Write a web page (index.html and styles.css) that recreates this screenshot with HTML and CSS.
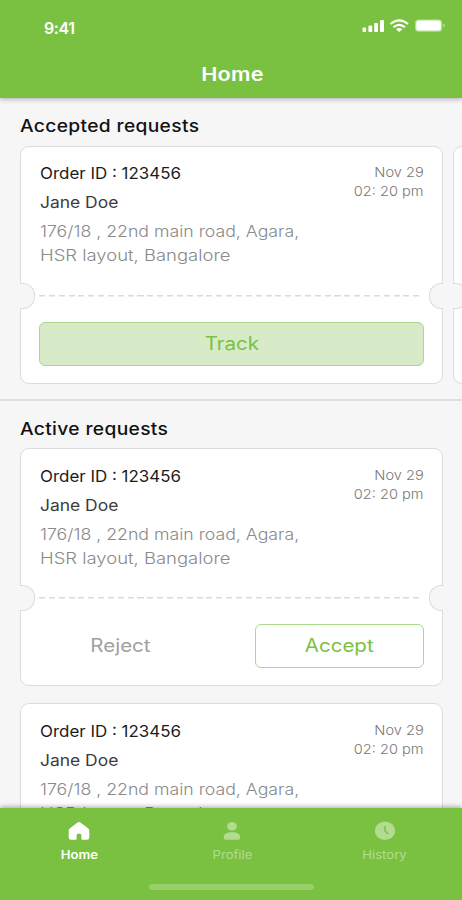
FILE: index.html
```html
<!DOCTYPE html>
<html lang="en">
<head>
<meta charset="utf-8">
<title>Home</title>
<link rel="stylesheet" href="styles.css">
</head>
<body>
<header class="header">
  <div class="status">
    <span class="clock">9:41</span>
    <svg class="status-icons" width="84" height="16" viewBox="0 0 84 16" fill="#fff">
      <rect x="0.5" y="8.5" width="3.6" height="4.5" rx="1"/><rect x="6.4" y="6.5" width="3.8" height="6.5" rx="1"/><rect x="12.2" y="4" width="3.8" height="9" rx="1"/><rect x="18" y="1" width="4" height="12" rx="1"/>
      <g fill="none" stroke="#fff" stroke-width="2.1"><path d="M28.5 5Q37.2-2.2 46 5"/><path d="M31.4 8.3Q37.2 3.6 43 8.3"/></g>
      <path d="M34 10.3Q37.2 7.8 40.4 10.3L37.2 13Z"/>
      <rect x="53" y=".5" width="27.2" height="12.2" rx="3.5" fill="#b5dc99"/><rect x="54.3" y="1.6" width="24.6" height="10" rx="2.5"/><path d="M81.4 4.4Q84.4 6.5 81.4 8.6Z" fill="#c4e3ac"/>
    </svg>
  </div>
  <h1 class="title"><span class="wide">Home</span></h1>
</header>
<main class="content">
  <section class="accepted">
    <h2 class="section-title"><span>Accepted requests</span></h2>
    <div class="card-row">
      <article class="card">
        <div class="details">
          <div>
            <p class="order"><span>Order ID : 123456</span></p>
            <p class="name"><span>Jane Doe</span></p>
            <p class="address"><span class="street">176/18 , 22nd main road, Agara,</span><br><span class="city">HSR layout, Bangalore</span></p>
          </div>
          <p class="date"><span class="day">Nov 29</span><br><span class="time">02: 20 pm</span></p>
        </div>
        <div class="tear"></div>
        <div class="actions"><button class="btn track"><span class="wide">Track</span></button></div>
      </article>
      <article class="card"><div class="details"></div><div class="tear"></div></article>
    </div>
  </section>
  <section class="active">
    <h2 class="section-title"><span>Active requests</span></h2>
    <div class="card-list">
      <article class="card">
        <div class="details">
          <div>
            <p class="order"><span>Order ID : 123456</span></p>
            <p class="name"><span>Jane Doe</span></p>
            <p class="address"><span class="street">176/18 , 22nd main road, Agara,</span><br><span class="city">HSR layout, Bangalore</span></p>
          </div>
          <p class="date"><span class="day">Nov 29</span><br><span class="time">02: 20 pm</span></p>
        </div>
        <div class="tear"></div>
        <div class="actions"><button class="btn reject"><span class="wide">Reject</span></button><button class="btn accept"><span class="wide">Accept</span></button></div>
      </article>
      <article class="card">
        <div class="details">
          <div>
            <p class="order"><span>Order ID : 123456</span></p>
            <p class="name"><span>Jane Doe</span></p>
            <p class="address"><span class="street">176/18 , 22nd main road, Agara,</span><br><span class="city">HSR layout, Bangalore</span></p>
          </div>
          <p class="date"><span class="day">Nov 29</span><br><span class="time">02: 20 pm</span></p>
        </div>
        <div class="tear"></div>
      </article>
    </div>
  </section>
</main>
<footer class="footer">
  <nav class="tabs">
    <a class="tab selected">
      <svg width="22" height="20" viewBox="0 0 22 20" fill="currentColor"><path d="M9.2 1.8Q11 .2 12.8 1.8L20.3 7.6Q21.3 8.5 21.3 9.7V16.5Q21.3 18.8 19 18.8H14.4Q13.4 18.8 13.4 17.8V14.5Q13.4 12.5 11 12.5T8.6 14.5V17.8Q8.6 18.8 7.6 18.8H3Q.7 18.8.7 16.5V9.7Q.7 8.5 1.7 7.6Z"/></svg>
      <span class="wide">Home</span>
    </a>
    <a class="tab">
      <svg width="22" height="20" viewBox="0 0 22 20" fill="currentColor"><ellipse cx="11" cy="5.2" rx="4.8" ry="4.3"/><path d="M2.7 16.5C2.7 12.7 6 11.2 11 11.2S19.3 12.7 19.3 16.5Q19.3 18.8 17 18.8H5Q2.7 18.8 2.7 16.5Z"/></svg>
      <span class="wide">Profile</span>
    </a>
    <a class="tab">
      <svg width="22" height="20" viewBox="0 0 22 20" fill="currentColor"><ellipse cx="11" cy="9.8" rx="10.2" ry="9.2"/><path d="M11 5V10L14.2 13" fill="none" stroke="#7ac142" stroke-width="1.5"/></svg>
      <span class="wide">History</span>
    </a>
  </nav>
  <div class="home-bar"></div>
</footer>
</body>
</html>
```

FILE: styles.css
```css
* { box-sizing: border-box; }
body, h1, h2, p { margin: 0; }
body {
  display: flex;
  flex-direction: column;
  width: 462px;
  height: 900px;
  overflow: hidden;
  background: #f6f6f6;
  font-family: Inter, "Liberation Sans", sans-serif;
  color: #1c1c1c;
  white-space: nowrap;
}
.header {
  z-index: 1;
  flex: none;
  height: 98px;
  background: #7ac142;
  color: #fff;
  box-shadow: 0 1px 5px rgba(60, 40, 80, .4);
}
.status {
  display: flex;
  justify-content: space-between;
  height: 60px;
  padding: 19px 16px 0 44px;
}
.clock { font-size: 16px; line-height: 19px; font-weight: 600; letter-spacing: -.4px; }
.title { padding-left: 2px; text-align: center; font-size: 19px; line-height: 30px; font-weight: 600; letter-spacing: .2px; }
.content { flex: 1; min-height: 0; overflow: hidden; }
.accepted { height: 303px; padding: 16px 0 0 20px; border-bottom: 2px solid #dedede; }
.section-title { font-size: 17px; line-height: 24px; font-weight: 500; letter-spacing: .3px; color: #111; }

/* Widened letterforms */
.section-title span, .order span, .name span, .address span { display: inline-block; transform-origin: left; }
.section-title span { transform: scaleX(1.13); }
.order span { transform: scaleX(1.058); }
.name span { transform: scaleX(1.09); }
.address .street { transform: scaleX(1.107); }
.address .city { transform: scaleX(1.153); }
.date span { display: inline-block; transform: scaleX(1.08); transform-origin: right; }
.wide { display: inline-block; transform: scaleX(1.14); }

.card-row { display: flex; gap: 10px; padding-top: 8px; }
.active { padding: 16px 19px 0 20px; }
.card-list { display: flex; flex-direction: column; gap: 17px; padding-top: 7px; }
.card {
  flex: none;
  width: 423px;
  height: 238px;
  border: 1.5px solid #dcdcdc;
  border-radius: 9px;
  background: #fff;
}
.details { display: flex; justify-content: space-between; height: 136px; padding: 14px 18px 0 19px; }
.card-list .details { padding-top: 15px; }
.order { font-size: 16px; line-height: 25px; }
.name { padding-top: 4px; font-size: 16px; line-height: 25px; color: #3c3c3c; }
.address { padding-top: 4px; font-size: 16px; line-height: 24px; font-weight: 300; color: #8a8a8a; }
.date { padding-top: 2px; font-size: 13.5px; line-height: 18.7px; font-weight: 300; color: #777; text-align: right; }
.tear {
  display: flex;
  align-items: center;
  justify-content: space-between;
  height: 25px;
  margin: 0 -1px;
  background: repeating-linear-gradient(90deg, #dadada 0 6px, transparent 6px 9.85px) 19px 12px / 381px 1.5px no-repeat;
}
.tear::before, .tear::after { content: ""; width: 13.5px; height: 24px; border: 1.5px solid #dcdcdc; background: #f6f6f6; }
.tear::before { border-left: 0; border-radius: 0 12px 12px 0; }
.tear::after { border-right: 0; border-radius: 12px 0 0 12px; }
.actions { display: flex; gap: 48px; padding: 14px 18px 0 18px; }
.btn { height: 44px; padding: 0; border: 1.5px solid transparent; border-radius: 6px; background: none; font: 18px/40px Inter, "Liberation Sans", sans-serif; }
.track { flex: 1; border-color: #a9d98a; background: #d8ebc8; color: #7ac142; }
.reject { flex: 1; padding-right: 5px; color: #a0a0a0; }
.accept { width: 169px; border-color: #a9d98a; color: #7ac142; }
.footer {
  z-index: 1;
  flex: none;
  height: 92px;
  background: #7ac142;
  box-shadow: 0 -1px 5px rgba(0, 0, 0, .35);
}
.tabs { display: flex; justify-content: space-between; height: 76px; padding: 13px 1px 0 3px; }
.tab { display: flex; flex-direction: column; align-items: center; width: 153px; color: #b2dc91; font-size: 11.5px; line-height: 16px; }
.tab span { padding-top: 6px; }
.tab.selected { color: #fff; font-weight: 600; }
.home-bar { width: 165px; height: 6px; margin: 0 auto; border-radius: 3px; background: #98cf6c; }
```
